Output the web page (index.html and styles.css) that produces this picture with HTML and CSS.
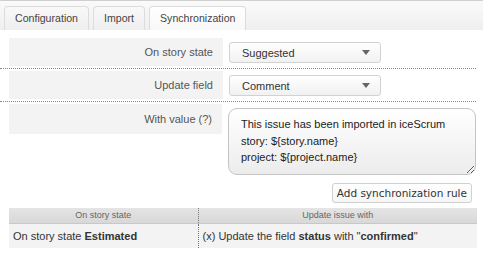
FILE: index.html
```html
<!DOCTYPE html>
<html lang="en">
<head>
    <meta charset="UTF-8">
    <title>Synchronization</title>
    <link rel="stylesheet" href="styles.css">
</head>
<body>
    <div class="tabbar">
        <div class="tab">Configuration</div>
        <div class="tab">Import</div>
        <div class="tab active">Synchronization</div>
    </div>

    <div class="form">
        <div class="row">
            <div class="label">On story state</div>
            <div class="field">
                <div class="select">
                    <span>Suggested</span>
                    <svg class="caret" width="8" height="5" viewBox="0 0 8 5"><path d="M0 0h8L4 5z" fill="#666"/></svg>
                </div>
            </div>
        </div>
        <div class="row">
            <div class="label">Update field</div>
            <div class="field">
                <div class="select">
                    <span>Comment</span>
                    <svg class="caret" width="8" height="5" viewBox="0 0 8 5"><path d="M0 0h8L4 5z" fill="#666"/></svg>
                </div>
            </div>
        </div>
        <div class="row last">
            <div class="label">With value (?)</div>
            <div class="field">
                <textarea class="value">This issue has been imported in iceScrum
story: ${story.name}
project: ${project.name}</textarea>
            </div>
        </div>
    </div>

    <div class="actions">
        <button class="btn">Add synchronization rule</button>
    </div>

    <table class="rules">
        <thead>
            <tr>
                <th class="col-state">On story state</th>
                <th>Update issue with</th>
            </tr>
        </thead>
        <tbody>
            <tr>
                <td class="col-state">On story state <b>Estimated</b></td>
                <td>(x) Update the field <b>status</b> with "<b>confirmed</b>"</td>
            </tr>
        </tbody>
    </table>
</body>
</html>
```

FILE: styles.css
```css
* {
    margin: 0;
    padding: 0;
    box-sizing: border-box;
}

body {
    font-family: "Liberation Sans", Arial, sans-serif;
    font-size: 11px;
    color: #333;
    background: #fff;
}

/* tabs */
.tabbar {
    display: flex;
    gap: 4px;
    height: 30px;
    padding: 5px 0 0 4px;
    width: 483px;
    border-top: 1px solid #cfcfcf;
    background: linear-gradient(#fafafa, #efefef);
}

.tab {
    height: 24px;
    line-height: 22px;
    padding: 0 10px;
    border: 1px solid #dcdcdc;
    border-bottom: none;
    border-radius: 4px 4px 0 0;
    background: linear-gradient(#f9f9f9, #eeeeee);
    color: #444;
    font-size: 10.6px;
}

.tab.active {
    background: linear-gradient(#ffffff, #f8f8f8);
}

/* form */
.form {
    margin-top: 6px;
    width: 476px;
}

.row {
    display: flex;
    padding: 2px 0;
    border-bottom: 1px dotted #888;
}

.row.last {
    border-bottom: none;
}

.label {
    width: 214px;
    height: 28px;
    margin-left: 9px;
    padding-right: 10px;
    background: #f3f3f3;
    color: #555;
    text-align: right;
    line-height: 28px;
}

.row.last .label {
    height: 30px;
    line-height: 30px;
}

.field {
    margin-left: 6px;
    flex: 1;
}

.select {
    display: flex;
    align-items: center;
    justify-content: space-between;
    width: 152px;
    height: 21px;
    margin-top: 4px;
    padding: 0 10px 0 12px;
    border: 1px solid #d2d2d2;
    border-radius: 3px;
    background: linear-gradient(#ffffff, #f1f1f1);
}

.value {
    display: block;
    width: 248px;
    height: 67px;
    margin-top: 4px;
    padding: 7px 12px;
    border: 1px solid #c4c4c4;
    border-radius: 9px;
    background: linear-gradient(#ffffff, #ececec);
    font-family: "Liberation Sans", Arial, sans-serif;
    font-size: 11px;
    line-height: 16.5px;
    color: #222;
    resize: both;
    overflow: hidden;
}

/* button */
.actions {
    display: flex;
    justify-content: flex-end;
    width: 472px;
    margin-top: 6px;
}

.btn {
    height: 20px;
    padding: 0 4px;
    border: 1px solid #d0d0d0;
    border-radius: 3px;
    background: linear-gradient(#ffffff, #f6f6f6);
    font-family: "DejaVu Sans", sans-serif;
    font-size: 10.5px;
    color: #333;
}

/* rules table */
.rules {
    width: 468px;
    margin: 5px 0 0 9px;
    border-collapse: collapse;
}

.rules th {
    height: 15px;
    padding: 0;
    font-size: 9px;
    font-weight: normal;
    color: #666;
    background: linear-gradient(#e4e4e4, #d8d8d8);
    border-bottom: 1px solid #c8c8c8;
}

.rules td {
    height: 25px;
    padding: 0 4px;
    background: #f3f3f3;
    color: #333;
}

.rules .col-state {
    width: 189px;
    border-right: 1px dotted #777;
}
```
